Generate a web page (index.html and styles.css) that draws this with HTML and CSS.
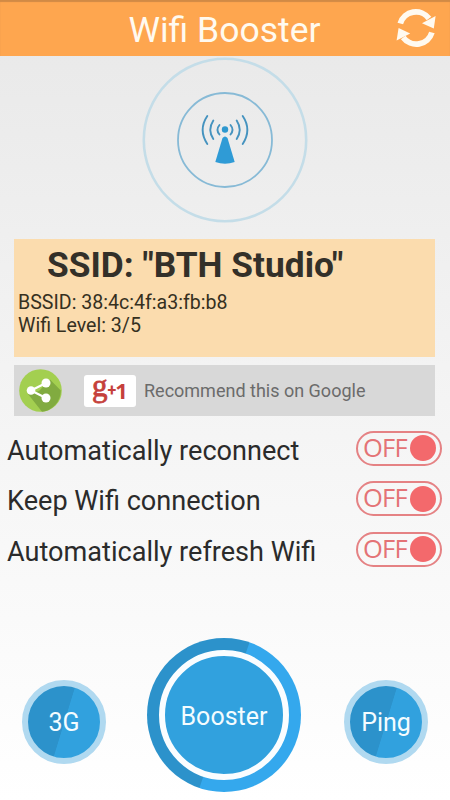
FILE: index.html
```html
<!doctype html>
<html lang="en">
  <head>
    <meta charset="UTF-8" />
    <meta name="viewport" content="width=device-width, initial-scale=1.0" />
    <title>Wifi Booster</title>
    <link rel="stylesheet" href="styles.css">
  </head>
  <body>
    <header class="top-bar">
      <h1>Wifi Booster</h1>
      <button class="refresh-button" aria-label="Refresh">
        <svg width="40" height="40" viewBox="0 0 40 40">
          <path d="M4.3 15.5 A16.3 16.3 0 0 1 33 10.5" fill="none" stroke="#fffaf0" stroke-width="5.8" />
          <path d="M39.6 8 L37.8 20.5 L26 15.3 Z" fill="#fffaf0" />
          <path d="M35.9 24.5 A16.3 16.3 0 0 1 7.2 29.5" fill="none" stroke="#fffaf0" stroke-width="5.8" />
          <path d="M0.6 32.6 L2.6 20 L14.2 25.6 Z" fill="#fffaf0" />
        </svg>
      </button>
    </header>

    <main>
      <div class="radar">
        <svg width="166" height="166" viewBox="0 0 166 166">
          <circle cx="83" cy="83" r="81.2" fill="none" stroke="#c4dde8" stroke-width="2.6" />
          <circle cx="83" cy="83" r="47" fill="none" stroke="#87bad6" stroke-width="1.8" />
          <circle cx="83" cy="72.5" r="3.2" fill="#2f98cf" />
          <path d="M80.5 81 Q83 78 85.5 81 L92.7 105 Q83 108.3 73.3 105 Z" fill="#2f9bd6" />
          <g fill="none" stroke="#4593bf" stroke-width="1.9" stroke-linecap="round">
            <path d="M77.5 68 Q73.5 72.8 77.5 77.5" />
            <path d="M88.5 68 Q92.5 72.8 88.5 77.5" />
            <path d="M71.3 63.5 Q65.3 72.8 71.3 82" />
            <path d="M94.7 63.5 Q100.7 72.8 94.7 82" />
            <path d="M65.3 59 Q56 72.8 65.3 87" />
            <path d="M100.7 59 Q110 72.8 100.7 87" />
          </g>
        </svg>
      </div>

      <section class="network-card">
        <h2>SSID: "BTH Studio"</h2>
        <p>BSSID: 38:4c:4f:a3:fb:b8</p>
        <p>Wifi Level: 3/5</p>
      </section>

      <section class="share-bar">
        <svg class="share-icon" width="43" height="43" viewBox="0 0 43 43">
          <circle cx="21.5" cy="21.5" r="21.3" fill="#a3cf50" />
          <path d="M31 10.5 L41.8 21.5 A21.3 21.3 0 0 1 23 42.7 L9 25 L20 22 Z" fill="#81ab40" />
          <path d="M27 14 L12 21.5 L27 29" fill="none" stroke="#fff" stroke-width="2.2" />
          <circle cx="27" cy="14" r="4.5" fill="#fff" />
          <circle cx="12" cy="21.5" r="4.3" fill="#fff" />
          <circle cx="27" cy="29" r="4.5" fill="#fff" />
        </svg>
        <button class="plus-one"><span class="g">g</span><span class="plus">+</span><span class="one">1</span></button>
        <span class="share-text">Recommend this on Google</span>
      </section>

      <section class="options">
        <div class="option">
          <span>Automatically reconnect</span>
          <button class="switch"><span>OFF</span><i class="knob"></i></button>
        </div>
        <div class="option">
          <span>Keep Wifi connection</span>
          <button class="switch"><span>OFF</span><i class="knob"></i></button>
        </div>
        <div class="option">
          <span>Automatically refresh Wifi</span>
          <button class="switch"><span>OFF</span><i class="knob"></i></button>
        </div>
      </section>
    </main>

    <footer class="actions">
      <button class="round-button">3G</button>
      <button class="boost-button"><span>Booster</span></button>
      <button class="round-button">Ping</button>
    </footer>
  </body>
</html>
```
FILE: styles.css
```css
:root {
  --orange: #fea64f;
  --card: #fbdcae;
  --blue: #31a1de;
  --blue-dark: #2c92cb;
  --red: #f3696c;
}

* {
  box-sizing: border-box;
}

body {
  display: flex;
  flex-direction: column;
  height: 800px;
  margin: 0;
  overflow: hidden;
  font-family: Roboto, 'Liberation Sans', sans-serif;
  color: #2b2b2b;
  background: linear-gradient(#e8e8e8, #f4f4f4 50%, #fff);
}

h1,
h2,
p {
  margin: 0;
  font-weight: normal;
  white-space: nowrap;
}

button {
  padding: 0;
  border: none;
  background: none;
  font-family: inherit;
}

/* Header */
.top-bar {
  display: grid;
  grid-template-columns: 56px 1fr 56px;
  align-items: center;
  height: 56px;
  background: var(--orange);
  box-shadow: inset 0 2px 1px #d18a45;
}

.top-bar h1 {
  grid-column: 2;
  padding: 3px 1px 0 0;
  font-size: 35.5px;
  line-height: 40px;
  text-align: center;
  color: #fffaf0;
}

.refresh-button {
  height: 40px;
}

.refresh-button svg {
  display: block;
  margin: -1px 0 0 2px;
}

.radar {
  display: flex;
  justify-content: center;
  height: 183px;
  padding: 1px 1px 0 0;
}

/* Current network */
.network-card {
  height: 118px;
  margin: 0 15px 0 14px;
  padding: 4px;
  background: var(--card);
  color: #35301f;
}

.network-card h2 {
  padding-left: 29px;
  font-size: 35.3px;
  font-weight: bold;
  line-height: 44px;
  color: #333029;
}

.network-card p {
  font-size: 19.6px;
  line-height: 22.5px;
}

.network-card h2 + p {
  padding-top: 5px;
}

.share-bar {
  display: flex;
  align-items: center;
  height: 51px;
  margin: 8px 15px 0 14px;
  padding-left: 5px;
  background: #d8d8d8;
}

.plus-one {
  display: flex;
  align-items: center;
  justify-content: center;
  width: 52px;
  height: 32px;
  margin: 0 8px 0 22px;
  border-radius: 3px;
  background: #fff;
  color: #c5403b;
  font-weight: bold;
}

.plus-one .g {
  margin-top: -10px;
  font-family: 'Liberation Serif', serif;
  font-size: 31px;
  font-weight: normal;
  line-height: 30px;
  -webkit-text-stroke: 0.8px #c5403b;
}

.plus-one .plus {
  font-size: 16px;
}

.plus-one .one {
  font-family: 'Open Sans', sans-serif;
  font-size: 22px;
  margin-top: -2px;
  margin-left: -1px;
}

.share-text {
  font-size: 18px;
  color: #6b6b6b;
}

/* Option switches */
.options {
  display: grid;
  grid-template-rows: repeat(3, 50.5px);
  margin-top: 7px;
  padding: 0 8px 0 7px;
}

.option {
  display: flex;
  align-items: center;
  justify-content: space-between;
  font-size: 27.1px;
  white-space: nowrap;
}

.option > span {
  padding-top: 5px;
}

.switch {
  display: flex;
  align-items: center;
  justify-content: space-between;
  width: 86px;
  height: 35px;
  padding: 0 4px 0 5px;
  border: 2px solid #e58284;
  border-radius: 18px;
  font-family: 'Open Sans', sans-serif;
  font-size: 25.5px;
  letter-spacing: -0.8px;
  color: #e47376;
}

.switch span {
  margin-top: -3px;
}

.knob {
  flex: none;
  width: 26px;
  height: 26px;
  border-radius: 50%;
  background: var(--red);
}

/* Bottom actions */
.actions {
  display: flex;
  align-items: center;
  justify-content: space-between;
  height: 154px;
  margin-top: auto;
  margin-bottom: 8px;
  padding: 0 22px;
}

.round-button {
  width: 84px;
  height: 84px;
  margin-top: 14px;
  border: 6px solid #b0d9f0;
  border-radius: 50%;
  background: linear-gradient(107deg, var(--blue-dark) 50%, var(--blue) 50.8%);
  font-size: 25px;
  color: #f4fcff;
}

.boost-button {
  display: grid;
  place-items: center;
  width: 154px;
  height: 154px;
  margin-right: 2px;
  border-radius: 50%;
  background: linear-gradient(109deg, var(--blue-dark) 50%, #34a8ed 50.5%);
}

.boost-button span {
  display: grid;
  place-items: center;
  width: 130px;
  height: 130px;
  padding-top: 2px;
  border: 6px solid #fafdff;
  border-radius: 50%;
  background: var(--blue);
  font-size: 25px;
  color: #f4fcff;
}
```
